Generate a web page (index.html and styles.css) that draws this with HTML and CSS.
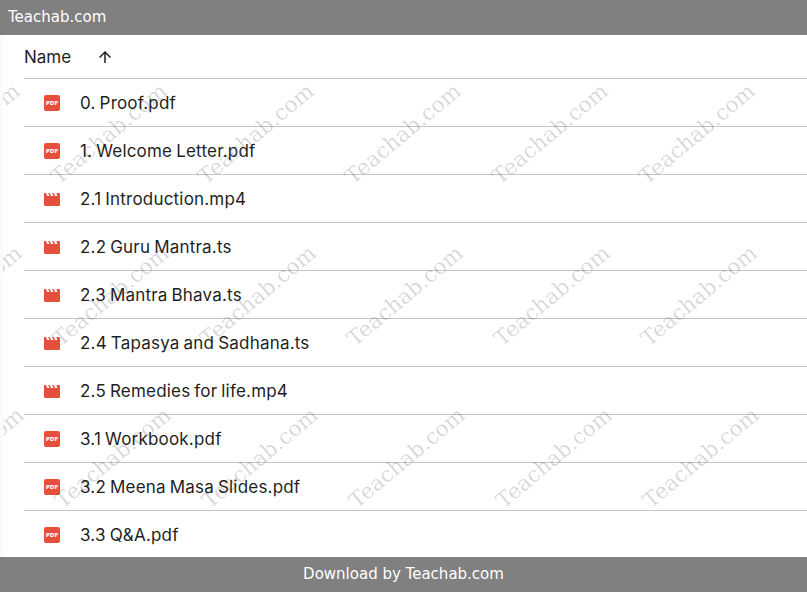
FILE: index.html
```html
<!DOCTYPE html>
<html lang="en">
<head>
    <meta charset="UTF-8">
    <meta name="viewport" content="width=device-width, initial-scale=1.0">
    <title>Teachab.com</title>
    <link rel="stylesheet" href="styles.css">
</head>
<body>
    <header class="top-bar">Teachab.com</header>

    <main class="file-list">
        <div class="list-head">
            <span class="head-name">Name</span>
            <svg class="sort-arrow" viewBox="0 0 24 24" width="18" height="18"><path d="M4 12l1.41 1.41L11 7.83V20h2V7.83l5.58 5.59L20 12l-8-8-8 8z"/></svg>
        </div>

        <div class="file-row"><svg class="file-icon"><use href="#icon-pdf"/></svg><span>0. Proof.pdf</span></div>
        <div class="file-row"><svg class="file-icon"><use href="#icon-pdf"/></svg><span>1. Welcome Letter.pdf</span></div>
        <div class="file-row"><svg class="file-icon"><use href="#icon-video"/></svg><span>2.1 Introduction.mp4</span></div>
        <div class="file-row"><svg class="file-icon"><use href="#icon-video"/></svg><span>2.2 Guru Mantra.ts</span></div>
        <div class="file-row"><svg class="file-icon"><use href="#icon-video"/></svg><span>2.3 Mantra Bhava.ts</span></div>
        <div class="file-row"><svg class="file-icon"><use href="#icon-video"/></svg><span>2.4 Tapasya and Sadhana.ts</span></div>
        <div class="file-row"><svg class="file-icon"><use href="#icon-video"/></svg><span>2.5 Remedies for life.mp4</span></div>
        <div class="file-row"><svg class="file-icon"><use href="#icon-pdf"/></svg><span>3.1 Workbook.pdf</span></div>
        <div class="file-row"><svg class="file-icon"><use href="#icon-pdf"/></svg><span>3.2 Meena Masa Slides.pdf</span></div>
        <div class="file-row"><svg class="file-icon"><use href="#icon-pdf"/></svg><span>3.3 Q&amp;A.pdf</span></div>

        <div class="watermarks" id="watermarks"></div>
    </main>

    <footer class="bottom-bar">Download by Teachab.com</footer>

    <svg class="icon-defs" width="0" height="0">
        <symbol id="icon-pdf" viewBox="0 0 16 16">
            <rect width="16" height="16" rx="2" fill="#e5503c"/>
            <text x="8" y="10.3" class="pdf-label">PDF</text>
        </symbol>
        <symbol id="icon-video" viewBox="0 0 16 16">
            <path fill="#e5503c" d="M0 5h16v9a1 1 0 0 1-1 1H1a1 1 0 0 1-1-1zM0 3a1 1 0 0 1 1-1h1l1.2 3H0zM4.2 2h1.6L7 5H5.4zM8.2 2h1.6L11 5H9.4zM12.2 2H15a1 1 0 0 1 1 1v2h-2.6z"/>
        </symbol>
    </svg>

    <script>
        // repeated diagonal watermark, each row drifts a little to the right
        const box = document.getElementById('watermarks');

        for (let row = 0; row < 3; row++) {
            for (let col = 0; col < 6; col++) {
                const mark = document.createElement('span');
                mark.classList.add('mark');
                mark.textContent = 'Teachab.com';
                mark.style.left = (-88 + col * 147 + row * 2) + 'px';
                mark.style.top = (129 + row * 162) + 'px';
                box.appendChild(mark);
            }
        }
    </script>
</body>
</html>
```

FILE: styles.css
```css
html, body {
    height: 100%;
}

body {
    margin: 0;
    display: flex;
    flex-direction: column;
    height: 592px;
    overflow: hidden;
    background-color: #fff;
    font-family: 'Inter', sans-serif;
}

.top-bar,
.bottom-bar {
    flex: none;
    height: 35px;
    line-height: 35px;
    background-color: #808080;
    color: #fff;
    font-family: 'DejaVu Sans', sans-serif;
    font-size: 15px;
    position: relative;
    z-index: 2;
}

.top-bar {
    padding-left: 8px;
}

.bottom-bar {
    text-align: center;
}

.file-list {
    flex: 1;
    padding-left: 21px;
    border-left: 3px solid #f8fafd;
    position: relative;
    overflow: hidden;
}

.list-head {
    display: flex;
    align-items: center;
    height: 43px;
    border-bottom: 1px solid #c4c7c5;
    color: #1f1f1f;
    font-size: 17px;
}

.head-name {
    width: 72px;
}

.sort-arrow {
    fill: #1f1f1f;
}

.file-row {
    display: flex;
    align-items: center;
    gap: 20px;
    height: 47px;
    padding-left: 20px;
    border-bottom: 1px solid #c4c7c5;
    color: #1f1f1f;
    font-size: 17px;
    letter-spacing: 0.2px;
    word-spacing: -1px;
}

.file-row:last-of-type {
    border-bottom: none;
}

.file-icon {
    width: 16px;
    height: 16px;
    flex: none;
}

.pdf-label {
    fill: #fff;
    font-family: 'DejaVu Sans', sans-serif;
    font-size: 5.6px;
    font-weight: bold;
    letter-spacing: 0;
    text-anchor: middle;
}

.icon-defs {
    position: absolute;
}

.watermarks {
    position: absolute;
    top: 0;
    left: 0;
    right: 0;
    bottom: 0;
    pointer-events: none;
}

.mark {
    position: absolute;
    font-family: 'DejaVu Serif', serif;
    font-size: 21.5px;
    color: rgba(0, 0, 0, 0.16);
    white-space: nowrap;
    transform-origin: left bottom;
    transform: rotate(-40deg);
}
```
